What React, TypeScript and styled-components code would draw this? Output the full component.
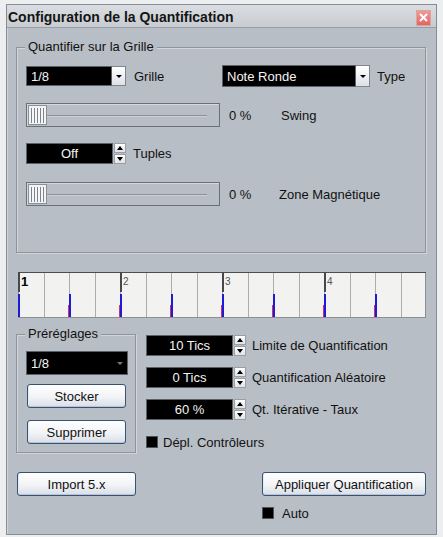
import React from 'react';
import styled, { createGlobalStyle } from 'styled-components';

const GlobalStyle = createGlobalStyle`
  html, body { margin: 0; padding: 0; background: #eceef0; }
  body { font-family: "Liberation Sans", Arial, sans-serif; font-size: 13px; color: #000; }
  * { box-sizing: border-box; }
`;

const BG = '#b8bec5';

const Window = styled.div`
  width: 431px;
  height: 531px;
  margin: 4px 0 0 6px;
  border: 1px solid #868c94;
  background: ${BG};
  display: flex;
  flex-direction: column;
`;

const TitleBar = styled.div`
  height: 23px;
  flex: none;
  display: flex;
  align-items: center;
  justify-content: space-between;
  padding: 0 5px 0 1px;
  background: linear-gradient(#dadde1, #c8ccd1);
  border-bottom: 1px solid #979da4;
`;

const Title = styled.span`
  font-weight: bold;
  font-size: 14px;
  color: #141414;
  margin-top: 1px;
`;

const CloseBtn = styled.div`
  width: 15px;
  height: 16px;
  margin-top: 3px;
  background: linear-gradient(#f09a96, #e2655f);
  border: 1px solid #d9a5a3;
  display: flex;
  align-items: center;
  justify-content: center;
`;

const Content = styled.div`
  flex: 1;
  display: flex;
  flex-direction: column;
  padding: 0 0 0 8px;
  border-left: 1px solid #d0d4d8;
`;

const Spacer = styled.div<{ $h: number }>`
  height: ${(p) => p.$h}px;
  flex: none;
`;

const GroupBox = styled.div<{ $w: number; $h: number; $pt: number }>`
  position: relative;
  width: ${(p) => p.$w}px;
  height: ${(p) => p.$h}px;
  border: 1px solid #8e949b;
  box-shadow: inset 1px 1px 0 #d2d6da, 1px 1px 0 #d2d6da;
  padding: ${(p) => p.$pt}px 0 0 9px;
`;

const Legend = styled.span`
  position: absolute;
  top: -9px;
  left: 8px;
  padding: 0 3px;
  line-height: 16px;
  background: ${BG};
  color: #111;
`;

const Rows = styled.div`
  display: flex;
  flex-direction: column;
`;

const Row = styled.div<{ $h: number; $mt?: number }>`
  display: flex;
  align-items: center;
  height: ${(p) => p.$h}px;
  margin-top: ${(p) => p.$mt ?? 0}px;
`;

const Label = styled.span<{ $w?: number; $pl?: number }>`
  flex: none;
  ${(p) => (p.$w ? `width: ${p.$w}px;` : '')}
  padding-left: ${(p) => p.$pl ?? 0}px;
  color: #111;
  white-space: nowrap;
`;

const Combo = styled.div<{ $h: number }>`
  display: flex;
  height: ${(p) => p.$h}px;
  flex: none;
`;

const Field = styled.div<{ $w: number; $align?: string }>`
  width: ${(p) => p.$w}px;
  height: 100%;
  background: #000;
  color: #f4f4f4;
  border: 1px solid #5c6168;
  display: flex;
  align-items: center;
  justify-content: ${(p) => p.$align ?? 'flex-start'};
  padding-left: ${(p) => (p.$align === 'center' ? 0 : 4)}px;
  position: relative;
`;

const DropArrow = styled.div`
  width: 14px;
  height: 100%;
  background: linear-gradient(#ffffff, #dde1e6);
  border: 1px solid #80868d;
  border-left: none;
  display: flex;
  align-items: center;
  justify-content: center;
  &::after {
    content: '';
    border-left: 3px solid transparent;
    border-right: 3px solid transparent;
    border-top: 3px solid #000;
  }
`;

const GrayArrow = styled.span`
  position: absolute;
  right: 4px;
  top: 10px;
  border-left: 3px solid transparent;
  border-right: 3px solid transparent;
  border-top: 3px solid #777;
`;

const Spinner = styled.div`
  width: 12px;
  height: 100%;
  margin-left: 1px;
  display: flex;
  flex-direction: column;
  gap: 1px;
`;

const SpinHalf = styled.div<{ $up?: boolean }>`
  flex: 1;
  background: linear-gradient(#ffffff, #dfe2e6);
  border: 1px solid #9a9fa6;
  display: flex;
  align-items: center;
  justify-content: center;
  &::after {
    content: '';
    border-left: 3px solid transparent;
    border-right: 3px solid transparent;
    ${(p) => (p.$up ? 'border-bottom: 4px solid #000;' : 'border-top: 4px solid #000;')}
  }
`;

const Slider = styled.div`
  width: 194px;
  height: 24px;
  flex: none;
  border: 1px solid #6a7077;
  box-shadow: inset 1px 1px 0 #d5d9dd;
  display: flex;
  align-items: center;
  padding: 0 12px 0 1px;
`;

const Thumb = styled.div`
  width: 19px;
  height: 20px;
  flex: none;
  background: #f2f3f5;
  border: 1px solid #8b9097;
  display: flex;
  align-items: center;
  justify-content: center;
`;

const Grip = styled.div`
  width: 13px;
  height: 15px;
  background: repeating-linear-gradient(90deg, #7d838a 0 1px, #f6f7f8 1px 3px);
`;

const Track = styled.div`
  flex: 1;
  height: 1px;
  background: #8b9198;
  box-shadow: 0 1px 0 #cdd1d5;
`;

const Ruler = styled.div`
  width: 408px;
  height: 46px;
  margin: 19px 0 0 2px;
  flex: none;
`;

const Bottom = styled.div`
  display: flex;
  margin-top: 16px;
`;

const PresetStack = styled.div`
  display: flex;
  flex-direction: column;
`;

const Button = styled.button<{ $w: number; $mt?: number; $ml?: number }>`
  width: ${(p) => p.$w}px;
  height: 24px;
  margin-top: ${(p) => p.$mt ?? 0}px;
  margin-left: ${(p) => p.$ml ?? 0}px;
  padding: 0;
  font-family: "Liberation Sans", Arial, sans-serif;
  font-size: 13px;
  color: #111;
  border: 1px solid #3a5272;
  border-radius: 3px;
  background: linear-gradient(#ffffff, #f1f3f6 55%, #d9dee6);
  box-shadow: inset 0 -1px 0 #b8c4d6, inset 1px 0 0 #e6ebf2;
`;

const RightCol = styled.div`
  display: flex;
  flex-direction: column;
  margin-left: 10px;
  padding-top: 1px;
`;

const Check = styled.span`
  width: 12px;
  height: 12px;
  flex: none;
  background: #000;
  border: 1px solid #4e535a;
`;

const ButtonRow = styled.div`
  display: flex;
  margin-top: 19px;
`;

const ApplyCol = styled.div`
  display: flex;
  flex-direction: column;
  margin-left: 126px;
`;

function CloseIcon() {
  return (
    <svg width="9" height="9" viewBox="0 0 9 9">
      <path d="M1 1L8 8M8 1L1 8" stroke="#fff" strokeWidth="2" />
    </svg>
  );
}

function Timeline() {
  const cw = 408 / 16;
  const cells = Array.from({ length: 17 }, (_, i) => i);
  const font = 'Liberation Sans, Arial, sans-serif';
  return (
    <svg width="408" height="46" viewBox="0 0 408 46">
      <rect x="0" y="0" width="408" height="46" fill="#f2f2f0" />
      {cells.map((i) => (
        <line
          key={`c${i}`}
          x1={Math.round(i * cw) + 0.5}
          y1={0}
          x2={Math.round(i * cw) + 0.5}
          y2={46}
          stroke="#a9adb1"
          strokeWidth="1"
        />
      ))}
      <rect x="0.5" y="0.5" width="407" height="45" fill="none" stroke="#8a8f95" />
      <line x1="0" y1="0.5" x2="408" y2="0.5" stroke="#4a4e53" />
      {cells
        .filter((i) => i % 4 === 0 && i < 16)
        .map((i) => (
          <line
            key={`b${i}`}
            x1={Math.round(i * cw) + 1}
            y1={0}
            x2={Math.round(i * cw) + 1}
            y2={20}
            stroke="#45494e"
            strokeWidth="2"
          />
        ))}
      {cells
        .filter((i) => i % 2 === 0 && i < 16)
        .map((i) => {
          const x = Math.round(i * cw);
          return (
            <g key={`m${i}`}>
              <line x1={x + 1} y1={22} x2={x + 1} y2={45} stroke="#1d1ad8" strokeWidth="2" />
              {i > 0 && <line x1={x - 0.5} y1={33} x2={x - 0.5} y2={45} stroke="#d0306c" strokeWidth="1" />}
            </g>
          );
        })}
      <text x="3" y="14" fontFamily={font} fontSize="13" fontWeight="bold" fill="#000">1</text>
      <text x={Math.round(4 * cw) + 3} y="13" fontFamily={font} fontSize="10" fill="#555">2</text>
      <text x={Math.round(8 * cw) + 3} y="13" fontFamily={font} fontSize="10" fill="#555">3</text>
      <text x={Math.round(12 * cw) + 3} y="13" fontFamily={font} fontSize="10" fill="#555">4</text>
    </svg>
  );
}

function SpinBox({ value }: { value: string }) {
  return (
    <Combo $h={21}>
      <Field $w={87} $align="center">{value}</Field>
      <Spinner>
        <SpinHalf $up />
        <SpinHalf />
      </Spinner>
    </Combo>
  );
}

function SliderCtl() {
  return (
    <Slider>
      <Thumb>
        <Grip />
      </Thumb>
      <Track />
    </Slider>
  );
}

export default function App() {
  return (
    <>
      <GlobalStyle />
      <Window>
        <TitleBar>
          <Title>Configuration de la Quantification</Title>
          <CloseBtn>
            <CloseIcon />
          </CloseBtn>
        </TitleBar>
        <Content>
          <Spacer $h={19} />
          <GroupBox $w={410} $h={206} $pt={17}>
            <Legend>Quantifier sur la Grille</Legend>
            <Rows>
              <Row $h={22}>
                <Combo $h={20}>
                  <Field $w={86}>1/8</Field>
                  <DropArrow />
                </Combo>
                <Label $w={96} $pl={8}>Grille</Label>
                <Combo $h={22}>
                  <Field $w={134}>Note Ronde</Field>
                  <DropArrow />
                </Combo>
                <Label $pl={7}>Type</Label>
              </Row>
              <Row $h={24} $mt={16}>
                <SliderCtl />
                <Label $w={61} $pl={9}>0 %</Label>
                <Label>Swing</Label>
              </Row>
              <Row $h={21} $mt={16}>
                <SpinBox value="Off" />
                <Label $pl={7}>Tuples</Label>
              </Row>
              <Row $h={24} $mt={18}>
                <SliderCtl />
                <Label $w={59} $pl={9}>0 %</Label>
                <Label>Zone Magnétique</Label>
              </Row>
            </Rows>
          </GroupBox>
          <Ruler>
            <Timeline />
          </Ruler>
          <Bottom>
            <GroupBox $w={120} $h={119} $pt={16}>
              <Legend>Préréglages</Legend>
              <PresetStack>
                <Combo $h={24}>
                  <Field $w={102}>
                    1/8
                    <GrayArrow />
                  </Field>
                </Combo>
                <Button $w={99} $mt={9} $ml={1}>Stocker</Button>
                <Button $w={99} $mt={12} $ml={1}>Supprimer</Button>
              </PresetStack>
            </GroupBox>
            <RightCol>
              <Row $h={21}>
                <SpinBox value="10 Tics" />
                <Label $pl={6}>Limite de Quantification</Label>
              </Row>
              <Row $h={21} $mt={11}>
                <SpinBox value="0 Tics" />
                <Label $pl={6}>Quantification Aléatoire</Label>
              </Row>
              <Row $h={21} $mt={11}>
                <SpinBox value="60 %" />
                <Label $pl={6}>Qt. Itérative - Taux</Label>
              </Row>
              <Row $h={12} $mt={16}>
                <Check />
                <Label $pl={5}>Dépl. Contrôleurs</Label>
              </Row>
            </RightCol>
          </Bottom>
          <ButtonRow>
            <Button $w={119} $ml={1}>Import 5.x</Button>
            <ApplyCol>
              <Button $w={164}>Appliquer Quantification</Button>
              <Row $h={12} $mt={11}>
                <Check />
                <Label $pl={8}>Auto</Label>
              </Row>
            </ApplyCol>
          </ButtonRow>
        </Content>
      </Window>
    </>
  );
}
